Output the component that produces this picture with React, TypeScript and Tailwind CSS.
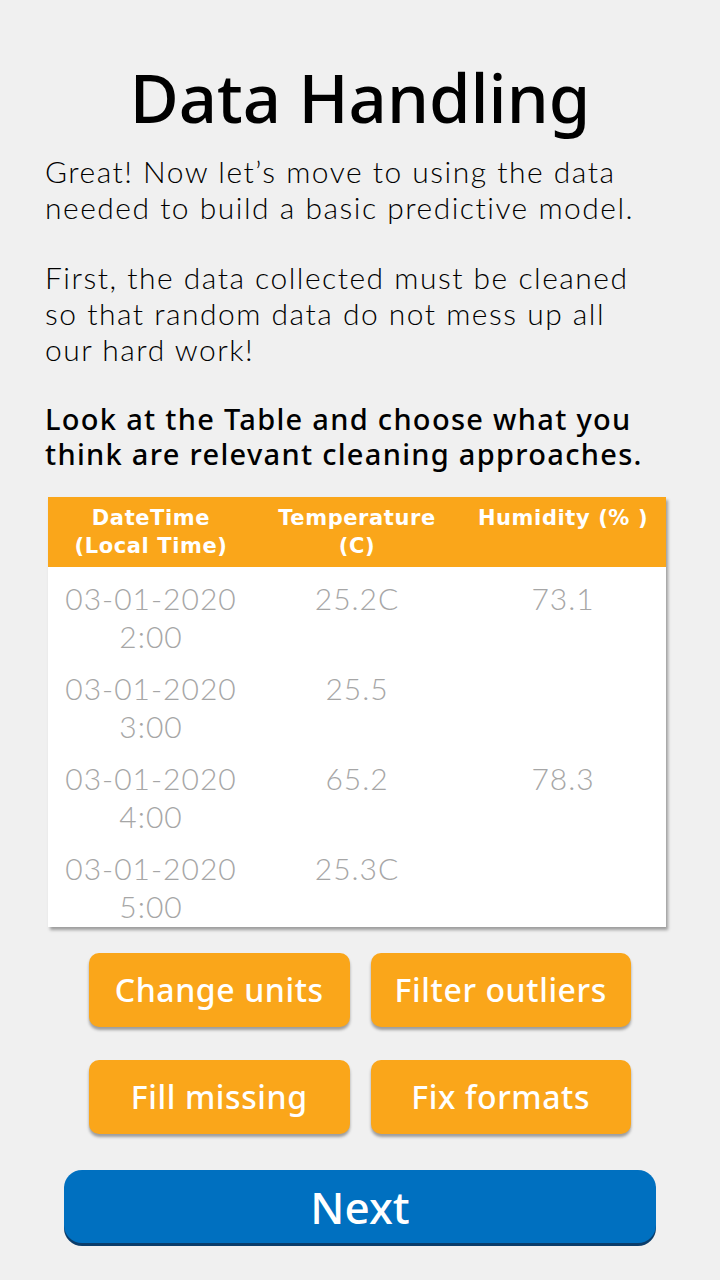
import React from "react";

const rows = [
  ["03-01-2020", "2:00", "25.2C", "73.1"],
  ["03-01-2020", "3:00", "25.5", ""],
  ["03-01-2020", "4:00", "65.2", "78.3"],
  ["03-01-2020", "5:00", "25.3C", ""],
];

export default function App() {
  return (
    <div className="w-[720px] h-[1280px] bg-[#f0f0f0] flex flex-col" style={{ fontFamily: "'Noto Sans', sans-serif" }}>
      <h1 className="mt-[53px] text-center text-[67px] leading-[88px] font-medium text-black">Data Handling</h1>
      <div className="px-[45px] mt-[12px] text-[30px] leading-[36px] font-light text-black tracking-[1.5px] whitespace-nowrap" style={{ fontFamily: "Lato, sans-serif" }}>
        <p>Great! Now let’s move to using the data<br />needed to build a basic predictive model.</p>
        <p className="mt-[34px]">First, the data collected must be cleaned<br />so that random data do not mess up all<br />our hard work!</p>
      </div>
      <div className="px-[45px] mt-[34px] text-[29px] font-medium text-black tracking-[1.3px] whitespace-nowrap">
        <div className="h-[35px] leading-[35px]">Look at the Table and choose what you</div>
        <div className="h-[35px] leading-[35px]">think are relevant cleaning approaches.</div>
      </div>
      <div className="mx-[48px] mt-[26px] w-[618px] bg-white shadow-[2px_3px_3px_rgba(0,0,0,0.35)]">
        <div className="grid grid-cols-3 bg-[#faa61a] h-[70px] pt-[7px] text-white text-[21px] leading-[28px] font-bold text-center tracking-[0.6px]" style={{ fontFamily: "'DejaVu Sans', sans-serif" }}>
          <div>DateTime<br />(Local Time)</div>
          <div>Temperature<br />(C)</div>
          <div>Humidity (% )</div>
        </div>
        {rows.map((r, i) => (
          <div key={i} className="grid grid-cols-3 h-[90px] pt-[12px] text-[30px] leading-[38px] font-light text-[#a6a6a6] text-center tracking-[1px]" style={{ fontFamily: "Lato, sans-serif" }}>
            <div>{r[0]}<br />{r[1]}</div>
            <div>{r[2]}</div>
            <div>{r[3]}</div>
          </div>
        ))}
      </div>
      <div className="grid grid-cols-2 gap-x-[21px] gap-y-[33px] mx-[89px] mt-[26px]">
        {["Change units", "Filter outliers", "Fill missing", "Fix formats"].map((t) => (
          <div key={t} className="h-[74px] rounded-[10px] bg-[#faa61a] shadow-[0_3px_3px_rgba(0,0,0,0.35)] flex items-center justify-center text-white text-[32px] font-medium tracking-[0.6px]">
            {t}
          </div>
        ))}
      </div>
      <div className="mx-[64px] mt-[36px] h-[73px] rounded-[18px] bg-[#0070c0] shadow-[0_3px_0_#0a3d6b] flex items-center justify-center text-white text-[44px] font-medium">
        Next
      </div>
    </div>
  );
}
